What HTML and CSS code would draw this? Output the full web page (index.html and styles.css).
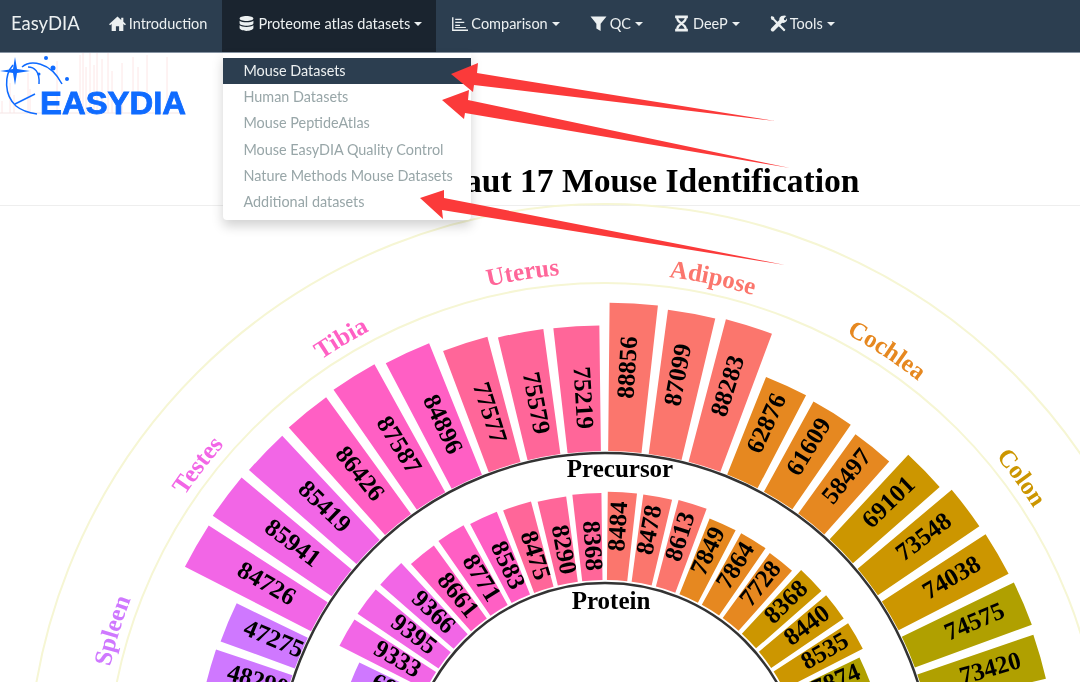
FILE: index.html
```html
<!DOCTYPE html>
<html lang="en">
<head>
<meta charset="UTF-8">
<meta name="viewport" content="width=device-width, initial-scale=1.0">
<title>EasyDIA</title>
<link rel="stylesheet" href="styles.css">
</head>
<body>

<nav class="navbar">
  <a class="brand">EasyDIA</a>
  <a class="nav-item first">
    <svg class="icon" viewBox="0 0 16 16"><path d="M8 1.500 0 8.600l1 1L2.500 8.400V15h4v-4.500h3V15h4V8.400L15 9.600l1-1-2.500-2.200V2.500h-2v2.100z"/></svg>
    <span>Introduction</span>
  </a>
  <div class="nav-item active">
    <svg class="icon" viewBox="0 0 16 16"><path d="M8 1c3.600 0 6.500 1 6.500 2.300S11.600 5.600 8 5.600 1.500 4.600 1.500 3.300 4.400 1 8 1zM1.500 5.300C2.800 6.400 5.300 6.900 8 6.900s5.200-.5 6.500-1.600v2.400C14.500 9 11.600 10 8 10S1.500 9 1.500 7.700zM1.500 9.700C2.800 10.800 5.300 11.300 8 11.300s5.200-.5 6.500-1.600v2.600C14.500 13.700 11.600 15 8 15s-6.500-1.300-6.500-2.700z"/></svg>
    <span>Proteome atlas datasets</span>
    <i class="caret"></i>
    <ul class="dropdown">
      <li class="current">Mouse Datasets</li>
      <li>Human Datasets</li>
      <li>Mouse PeptideAtlas</li>
      <li>Mouse EasyDIA Quality Control</li>
      <li>Nature Methods Mouse Datasets</li>
      <li>Additional datasets</li>
    </ul>
  </div>
  <a class="nav-item">
    <svg class="icon" viewBox="0 0 16 16"><path d="M1 2h1.300v11.700H16V15H1zM4 3.500h6v1.300H4zM4 6.300h8.500v1.300H4zM4 9.100h4.500v1.300H4zM4 11.200h10v1.100H4z"/></svg>
    <span>Comparison</span>
    <i class="caret"></i>
  </a>
  <a class="nav-item">
    <svg class="icon" viewBox="0 0 16 16"><path d="M.5 1.500h15L10 8.300V15l-4-2.400V8.300z"/></svg>
    <span>QC</span>
    <i class="caret"></i>
  </a>
  <a class="nav-item">
    <svg class="icon" viewBox="0 0 16 16"><path d="M2 .5h12v2.500h-1c0 2.500-2 4-3.500 5C11 9 13 10.500 13 13h1v2.500H2V13h1c0-2.500 2-4 3.500-5C5 7 3 5.500 3 3H2zM5 3c.2 1.200 1.700 2.800 3 3.700C9.300 5.800 10.800 4.200 11 3zM8 9.300C6.700 10.200 5.200 11.800 5 13h6c-.2-1.200-1.700-2.800-3-3.700z"/></svg>
    <span>DeeP</span>
    <i class="caret"></i>
  </a>
  <a class="nav-item">
    <svg class="icon" viewBox="0 0 16 16"><path d="M1.500 1 3.800 1.800 4.200 3.500 9 8.300 14.500 13.800 13.800 15 13 15.300 7.500 9.800 3 5 1.300 4.300.7 2zM12.300.7A3.500 3.500 0 0 1 15.300 1l-2.200 2.200.2 1.500 1.500.2L15.900 3A3.500 3.500 0 0 1 11.500 7.300L3.800 15a1.500 1.500 0 0 1-2.500-2.500L8.800 4.800A3.500 3.500 0 0 1 12.300.7z"/></svg>
    <span>Tools</span>
    <i class="caret"></i>
  </a>
</nav>

<header class="page-head">
  <svg class="logo" viewBox="0 0 190 65">
    <g class="spectrum">
      <path d="M2 60V48M10 60V30M14 60V42M28 60V20M30 60V36M57 60V8M80 60V2M83 60V0M86 60V14M90 60V0M94 60V12M97 60V0M102 60V6M108 60V0M112 60V18M122 60V10M133 60V4M138 60V14M147 60V2M167 60V4"/>
      <path class="axis" d="M0 60H186"/>
      <path class="axis" d="M12 66h2M49 66h2M86 66h2M123 66h2M160 66h2"/>
    </g>
    <path class="star" d="M15 4 17 16 30 18 17 20 15 32 13 20 0 18 13 16z"/>
    <g class="orbit">
      <path d="M22 14C30 7 50 8 62 31"/>
      <path d="M28 14C34 14 40 18 39 31"/>
      <path d="M13 12C4 22 4 42 16 53 22 58 30 60 37 61"/>
      <path d="M15 51 35 41"/>
    </g>
    <circle class="dot" cx="46" cy="5" r="2"/>
    <circle class="dot" cx="53" cy="15" r="2.500"/>
    <circle class="dot" cx="67" cy="26" r="2"/>
    <circle class="dot" cx="39" cy="21" r="1.500"/>
    <text class="logo-text" x="40" y="61" textLength="146" lengthAdjust="spacingAndGlyphs">EASYDIA</text>
  </svg>
  <h1 class="title">aut 17 Mouse Identification</h1>
</header>

<svg class="chart" id="chart" viewBox="0 205 1080 477"></svg>

<svg class="arrows" viewBox="0 0 1080 682">
  <path d="M451 74 478 63 477 73 775 121 474 85 473 92z"/>
  <path d="M442 100 469 90 468 100 790 168 465 113 464 119z"/>
  <path d="M420 198 444 190 444 198 785 265 442 210 443 219z"/>
</svg>

<script src="chart.js"></script>
</body>
</html>
```

FILE: styles.css
```css
html, body {
  margin: 0;
  height: 682px;
  overflow: hidden;
  background-color: #fff;
}
body {
  font-family: Lato, "Open Sans", sans-serif;
  position: relative;
  filter: blur(0.35px);
}
.navbar {
  display: flex;
  align-items: stretch;
  height: 52px;
  background-color: #2c3e50;
  border-bottom: 1px solid #8794a3;
  color: #ecf0f1;
  font-size: 14.5px;
}
.brand {
  display: flex;
  align-items: center;
  padding: 0 14px 6px 11px;
  font-size: 18.5px;
}
.nav-item {
  display: flex;
  align-items: center;
  gap: 3px;
  padding: 0 15px 6px;
  position: relative;
}
.nav-item.active {
  background-color: #1a242f;
  padding: 0 14px 6px 16px;
}
.icon {
  width: 17px;
  height: 17px;
  fill: currentColor;
}
.caret {
  width: 0;
  height: 0;
  margin-left: 1px;
  margin-top: 2px;
  border-top: 4px solid currentColor;
  border-left: 4px solid transparent;
  border-right: 4px solid transparent;
}
.dropdown {
  position: absolute;
  top: 53px;
  left: 1px;
  width: 248px;
  margin: 0;
  padding: 5px 0;
  list-style: none;
  background-color: #fff;
  border-radius: 0 0 4px 4px;
  box-shadow: 0 6px 12px rgba(0, 0, 0, 0.18);
  font-size: 14.4px;
  color: #98a6a8;
  z-index: 5;
}
.dropdown li {
  height: 26.2px;
  line-height: 26px;
  padding-left: 20px;
  white-space: nowrap;
}
.dropdown li.current {
  background-color: #2c3e50;
  color: #ecf0f1;
}
.page-head {
  height: 152px;
  border-bottom: 1px solid #eee;
}
.logo {
  display: block;
  width: 190px;
  height: 65px;
}
.spectrum path {
  fill: none;
  stroke: #fde6e6;
  stroke-width: 1;
}
.spectrum .axis {
  stroke: #f5e6e6;
}
.star, .dot {
  fill: #0f6bff;
}
.orbit path {
  fill: none;
  stroke: #0f6bff;
  stroke-width: 1.500;
}
.logo-text {
  font-family: "Liberation Sans", sans-serif;
  font-weight: bold;
  font-size: 32px;
  fill: #0f6bff;
  stroke: #0f6bff;
  stroke-width: 0.8;
}
.title {
  margin: 45px 0 0 465px;
  font-family: "Liberation Serif", serif;
  font-weight: bold;
  font-size: 33.600px;
  line-height: 36px;
  color: #000;
  white-space: nowrap;
}
.chart {
  display: block;
  width: 1080px;
  height: 477px;
  overflow: visible;
  font-family: "Liberation Serif", serif;
  font-weight: bold;
}
.guide {
  fill: none;
  stroke: #f6f6d4;
  stroke-width: 2;
}
.axis-ring {
  fill: none;
  stroke: #333;
  stroke-width: 2.500;
}
.value {
  font-size: 25px;
  fill: #000;
  text-anchor: middle;
  dominant-baseline: central;
}
.ring-name {
  font-size: 25px;
  fill: #000;
  text-anchor: middle;
}
.tissue {
  font-size: 25px;
  text-anchor: middle;
}
.arrows {
  position: absolute;
  top: 0;
  left: 0;
  width: 1080px;
  height: 682px;
  pointer-events: none;
  z-index: 6;
}
.arrows path {
  fill: #fb3a3a;
}
```

FILE: chart.js
```js
const NS = 'http://www.w3.org/2000/svg';
const CX = 605, CY = 780;
const STEP = 7.06, START = 3.45, WIDTH = 5.8;

const groups = [
  { color: '#cf78ff' },
  { color: '#f266e6' },
  { color: '#ff5fc4' },
  { color: '#ff6699' },
  { color: '#fb766d' },
  { color: '#e68820' },
  { color: '#cc9600' },
  { color: '#b0a000' }
];

// k = position from the first adipose bar, group = index in groups
const bars = [
  [-11, 0, 48290, 6900], [-10, 0, 47275, 6900],
  [-9, 1, 84726, 9333], [-8, 1, 85941, 9395], [-7, 1, 85419, 9366],
  [-6, 2, 86426, 8661], [-5, 2, 87587, 8771], [-4, 2, 84896, 8583],
  [-3, 3, 77577, 8475], [-2, 3, 75579, 8290], [-1, 3, 75219, 8368],
  [0, 4, 88856, 8484], [1, 4, 87099, 8478], [2, 4, 88283, 8613],
  [3, 5, 62876, 7849], [4, 5, 61609, 7864], [5, 5, 58497, 7728],
  [6, 6, 69101, 8368], [7, 6, 73548, 8440], [8, 6, 74038, 8535],
  [9, 7, 74575, 7874], [10, 7, 73420, 7800]
];

const labels = [
  ['Spleen', -73, 508, '#cf78ff'],
  ['Testes', -52.2, 508, '#f266e6'],
  ['Tibia', -30.8, 508, '#ff5fc4'],
  ['Uterus', -9.2, 508, '#ff6699'],
  ['Adipose', 12.1, 508, '#fb766d'],
  ['Cochlea', 33.2, 508, '#e68820'],
  ['Colon', 53.9, 508, '#cc9600']
];

const chart = document.getElementById('chart');

function el(name, attrs, text) {
  const node = document.createElementNS(NS, name);
  for (const key in attrs) node.setAttribute(key, attrs[key]);
  if (text) node.textContent = text;
  chart.appendChild(node);
  return node;
}

function point(r, deg) {
  const a = deg * Math.PI / 180;
  return [CX + r * Math.sin(a), CY - r * Math.cos(a)];
}

function sector(r0, r1, a0, a1) {
  const p = [point(r0, a0), point(r1, a0), point(r1, a1), point(r0, a1)];
  return 'M' + p[0] + 'L' + p[1] + 'A' + r1 + ' ' + r1 + ' 0 0 1 ' + p[2] +
    'L' + p[3] + 'A' + r0 + ' ' + r0 + ' 0 0 0 ' + p[0] + 'Z';
}

function bar(k, color, r0, r1, value) {
  const angle = START + STEP * k;
  el('path', { d: sector(r0, r1, angle - WIDTH / 2, angle + WIDTH / 2), fill: color });
  const right = k >= 0;
  const [x, y] = point((r0 + r1) / 2 + (right ? 10 : -9), angle);
  const rot = right ? angle - 90 : angle + 90;
  el('text', { class: 'value', x: x, y: y, dy: -3, transform: 'rotate(' + rot + ' ' + x + ' ' + y + ')' }, String(value));
}

el('circle', { class: 'guide', cx: CX, cy: CY, r: 577 });
el('circle', { class: 'guide', cx: CX, cy: CY, r: 498 });

bars.forEach(([k, group, outer, inner]) => {
  const color = groups[group].color;
  bar(k, color, 330, 330 + 0.00167 * outer, outer);
  bar(k, color, 201, 201 + 0.0104 * inner, inner);
});

el('circle', { class: 'axis-ring', cx: CX, cy: CY, r: 328 });
el('circle', { class: 'axis-ring', cx: CX, cy: CY, r: 198 });
el('text', { class: 'ring-name', x: 620, y: 476 }, 'Precursor');
el('text', { class: 'ring-name', x: 611, y: 608 }, 'Protein');

labels.forEach(([name, angle, r, color], i) => {
  const a = point(r, angle - 25), b = point(r, angle + 25);
  el('path', { id: 'label' + i, d: 'M' + a + 'A' + r + ' ' + r + ' 0 0 1 ' + b, fill: 'none' });
  const text = el('text', { class: 'tissue', fill: color });
  const span = document.createElementNS(NS, 'textPath');
  span.setAttribute('href', '#label' + i);
  span.setAttribute('startOffset', '50%');
  span.textContent = name;
  text.appendChild(span);
});
```
